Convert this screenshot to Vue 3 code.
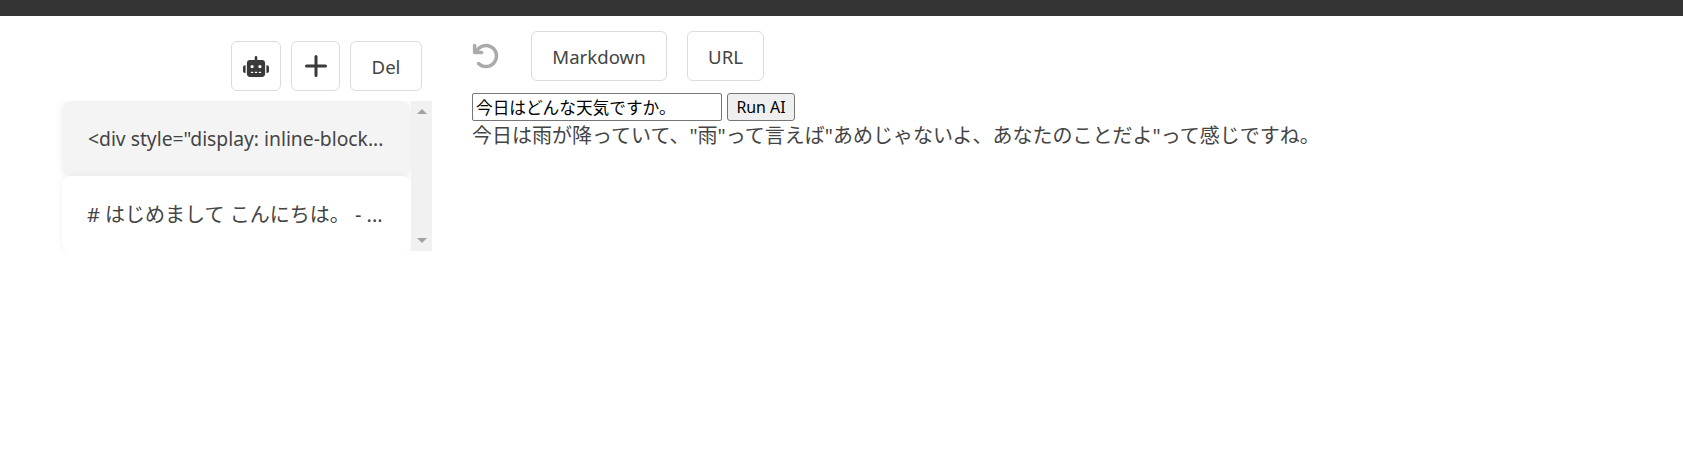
<script setup>
const items = [
  { id: 1, text: '<div style="display: inline-block...', active: true, latin: true },
  { id: 2, text: '# はじめまして こんにちは。 - ...', active: false, latin: false },
]
</script>

<template>
  <div class="page">
    <div class="topbar"></div>
    <main class="main">
      <aside class="side">
        <div class="tools">
          <button class="btn robot" aria-label="AI">
            <svg width="26" height="21" viewBox="0 0 640 512" fill="#3a3a3a"><path d="M320 0c17.7 0 32 14.3 32 32V96H472c39.8 0 72 32.2 72 72V440c0 39.8-32.2 72-72 72H168c-39.8 0-72-32.2-72-72V168c0-39.8 32.2-72 72-72H288V32c0-17.7 14.3-32 32-32zM208 384c-8.8 0-16 7.2-16 16s7.2 16 16 16h32c8.8 0 16-7.2 16-16s-7.2-16-16-16H208zm96 0c-8.8 0-16 7.2-16 16s7.2 16 16 16h32c8.8 0 16-7.2 16-16s-7.2-16-16-16H304zm96 0c-8.8 0-16 7.2-16 16s7.2 16 16 16h32c8.8 0 16-7.2 16-16s-7.2-16-16-16H400zM264 256a40 40 0 1 0 -80 0 40 40 0 1 0 80 0zm152 40a40 40 0 1 0 0-80 40 40 0 1 0 0 80zM48 224H64V416H48c-26.5 0-48-21.5-48-48V272c0-26.5 21.5-48 48-48zm544 0c26.5 0 48 21.5 48 48v96c0 26.5-21.5 48-48 48H576V224h16z"/></svg>
          </button>
          <button class="btn plus" aria-label="Add">
            <svg width="22" height="22" viewBox="0 0 22 22" fill="none" stroke="#3a3a3a" stroke-width="3" stroke-linecap="round"><path d="M11 1.5v19M1.5 11h19"/></svg>
          </button>
          <button class="btn del">Del</button>
        </div>
        <div class="listbox">
          <ul class="list">
            <li v-for="item in items" :key="item.id" class="item" :class="{ active: item.active, latin: item.latin }">
              <span class="item-text">{{ item.text }}</span>
            </li>
          </ul>
          <div class="scroll">
            <span class="arrow up"></span>
            <span class="arrow down"></span>
          </div>
        </div>
      </aside>
      <section class="content">
        <div class="actions">
          <svg class="undo" width="28" height="28" viewBox="0 0 512 512" fill="#aaaaaa"><path d="M125.7 160H176c17.7 0 32 14.3 32 32s-14.3 32-32 32H48c-17.7 0-32-14.3-32-32V64c0-17.7 14.3-32 32-32s32 14.3 32 32v51.2L97.6 97.6c87.5-87.5 229.3-87.5 316.8 0s87.5 229.3 0 316.8s-229.3 87.5-316.8 0c-12.5-12.5-12.5-32.8 0-45.3s32.8-12.5 45.3 0c62.5 62.5 163.8 62.5 226.3 0s62.5-163.8 0-226.3s-163.8-62.5-226.3 0L125.7 160z"/></svg>
          <button class="btn md">Markdown</button>
          <button class="btn url">URL</button>
        </div>
        <div class="ai-row">
          <input class="ai-input" value="今日はどんな天気ですか。" />
          <button class="ai-run">Run AI</button>
        </div>
        <p class="answer">今日は雨が降っていて、"雨"って言えば"あめじゃないよ、あなたのことだよ"って感じですね。</p>
      </section>
    </main>
  </div>
</template>

<style>
html, body { margin: 0; background: #fff; }
</style>

<style scoped>
.page {
  font-family: "Noto Sans", "Noto Sans CJK JP", sans-serif;
  font-size: 20px;
  color: #444;
}
.topbar { height: 16px; background: #343434; }
.main { display: flex; }
.side {
  width: 382px;
  margin-left: 50px;
  padding-top: 25px;
  flex: none;
}
.tools {
  display: flex;
  justify-content: flex-end;
  gap: 10px;
  padding-right: 10px;
  margin-bottom: 10px;
}
.btn {
  height: 50px;
  box-sizing: border-box;
  border: 1px solid #dcdcdc;
  border-radius: 6px;
  background: #fff;
  font-family: inherit;
  font-size: 18.6px;
  color: #444;
  padding: 0;
  display: flex;
  align-items: center;
  justify-content: center;
}
.robot { width: 50px; }
.plus { width: 49px; }
.del { width: 72px; }
.md { width: 136px; }
.url { width: 77px; }
.listbox {
  display: flex;
  height: 150px;
  overflow: hidden;
}
.list {
  list-style: none;
  margin: 0;
  padding: 0 0 0 12px;
  width: 361px;
  box-sizing: border-box;
  flex: none;
}
.item {
  position: relative;
  height: 75px;
  box-sizing: border-box;
  padding: 0 25px;
  display: flex;
  align-items: center;
  border-radius: 9px;
  background: #fff;
  box-shadow: 0 0 8px rgba(0, 0, 0, 0.06);
}
.item.active { background: #f4f4f4; }
.item.latin { font-size: 19.3px; padding-left: 26px; }
.item-text {
  display: block;
  white-space: nowrap;
}
.scroll {
  position: relative;
  width: 21px;
  flex: none;
  background: #f1f1f1;
}
.arrow {
  position: absolute;
  left: 6px;
  width: 0;
  height: 0;
  border-left: 5px solid transparent;
  border-right: 5px solid transparent;
}
.arrow.up { top: 8px; border-bottom: 5px solid #a3a3a3; }
.arrow.down { bottom: 8px; border-top: 5px solid #a3a3a3; }
.content { margin-left: 40px; padding-top: 15px; }
.actions {
  display: flex;
  align-items: center;
  height: 50px;
  margin-bottom: 12px;
}
.undo { margin-right: 31px; }
.url { margin-left: 20px; }
.ai-row { display: flex; height: 28px; gap: 5px; }
.ai-input {
  width: 250px;
  box-sizing: border-box;
  height: 28px;
  border: 1px solid #767676;
  border-radius: 2px;
  padding: 1px 3px;
  font: 16.67px "Noto Sans", "Noto Sans CJK JP", sans-serif;
  color: #000;
  outline: none;
}
.ai-run {
  width: 68px;
  height: 28px;
  box-sizing: border-box;
  border: 1px solid #767676;
  border-radius: 3px;
  background: #efefef;
  color: #000;
  padding: 0;
  font: 15.9px "Noto Sans", "Noto Sans CJK JP", sans-serif;
}
.answer {
  margin: 0;
  line-height: 30px;
  white-space: nowrap;
}
</style>
